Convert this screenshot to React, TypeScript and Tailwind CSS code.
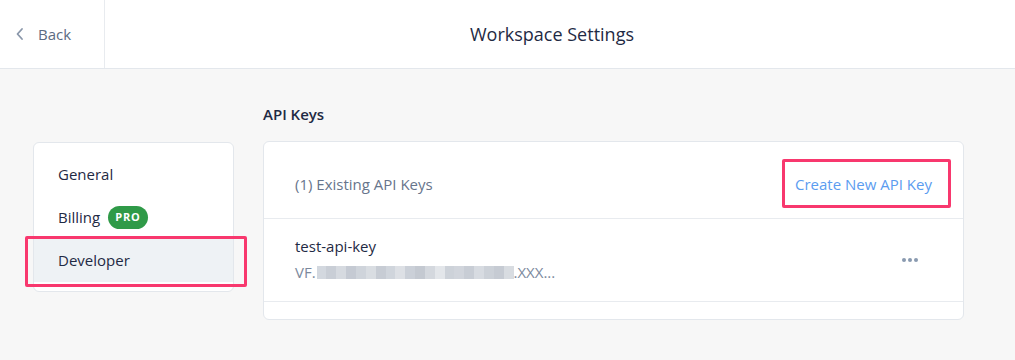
import React from "react";

const blocks = [
  "#d3d8df", "#c9ced6", "#d6dae0", "#c5cad3", "#cfd4db", "#d9dde2", "#c7ccd4", "#d0d5dc",
  "#dde0e5", "#cbd0d8", "#c4c9d1", "#d4d8de", "#e3e6ea", "#cdd2d9", "#d1d5dc", "#c8cdd5",
  "#d7dbe1", "#ccd1d8", "#c6cbd3", "#d8dce1",
];

export default function App() {
  return (
    <div className="w-[1015px] h-[360px] bg-[#f7f7f7] overflow-hidden" style={{ fontFamily: '"Open Sans", sans-serif' }}>
      <header className="h-[69px] bg-white border-b border-[#e3e7ec] flex">
        <div className="w-[105px] border-r border-[#e8ebef] flex items-center pl-[15px] gap-[13px] text-[#5c6b82] text-[15px]">
          <svg width="10" height="14" viewBox="0 0 10 14" fill="none">
            <path d="M7 2 L2.5 7 L7 12" stroke="#8a97aa" strokeWidth="1.8" strokeLinecap="round" strokeLinejoin="round" />
          </svg>
          <span>Back</span>
        </div>
        <div className="flex-1 flex items-center justify-center pr-[16px]">
          <span className="text-[18px] text-[#1f2a44]">Workspace Settings</span>
        </div>
      </header>
      <div className="flex">
        <div className="ml-[33px] mt-[73px] relative">
          <div className="w-[201px] bg-white border border-[#e3e7ec] rounded-[6px] pt-[10px] pb-[9px] text-[15px] text-[#1f2a44]">
            <div className="h-[43px] flex items-center pl-[24px]">General</div>
            <div className="h-[43px] flex items-center pl-[24px] gap-[8px]">
              <span>Billing</span>
              <span className="bg-[#2f9a48] text-white text-[11px] font-bold tracking-[0.08em] rounded-full h-[23px] px-[7px] flex items-center">PRO</span>
            </div>
            <div className="h-[43px] flex items-center pl-[24px] bg-[#eef2f5]">Developer</div>
          </div>
          <div className="absolute left-[-8px] top-[94px] w-[222px] h-[51px] border-[3px] border-[#f8386e] rounded-[2px]" />
        </div>
        <div className="ml-[29px] pt-[35px]">
          <h2 className="text-[15px] font-semibold text-[#1f2a44] leading-[20px]">API Keys</h2>
          <div className="mt-[17px] w-[701px] h-[179px] bg-white border border-[#e3e7ec] rounded-[6px]">
            <div className="h-[77px] flex items-center justify-between pl-[31px] pr-[31px] border-b border-[#e8ebef] pt-[8px]">
              <span className="text-[15px] text-[#67758c]">(1) Existing API Keys</span>
              <span className="relative text-[15px] text-[#5b9cf0]">
                Create New API Key
                <span className="absolute left-[-13px] right-[-19px] top-[-14px] bottom-[-13px] border-[3px] border-[#f8386e] rounded-[2px]" />
              </span>
            </div>
            <div className="h-[83px] flex items-center justify-between pl-[31px] pr-[45px] border-b border-[#e8ebef]">
              <div className="flex flex-col">
                <span className="text-[15px] text-[#1f2a44] leading-[20px] mt-[-2px]">test-api-key</span>
                <span className="flex items-center text-[15px] text-[#7b899d] leading-[20px] mt-[6px]">
                  VF.
                  <span className="flex h-[13px] ml-[1px]">
                    {blocks.map((c, i) => (
                      <span key={i} className="w-[9.85px] h-[13px]" style={{ background: c }} />
                    ))}
                  </span>
                  .XXX...
                </span>
              </div>
              <div className="flex gap-[2px]">
                <span className="w-[4px] h-[4px] rounded-full bg-[#8a9ab0]" />
                <span className="w-[4px] h-[4px] rounded-full bg-[#8a9ab0]" />
                <span className="w-[4px] h-[4px] rounded-full bg-[#8a9ab0]" />
              </div>
            </div>
          </div>
        </div>
      </div>
    </div>
  );
}
